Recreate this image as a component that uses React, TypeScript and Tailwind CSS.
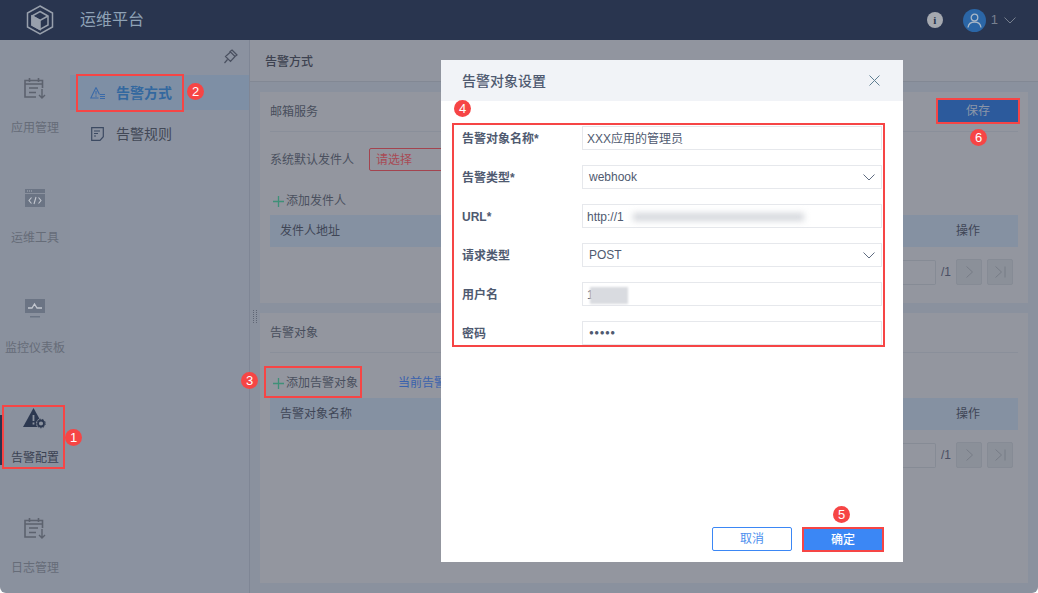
import type { ReactNode } from 'react';

const ink = '#5c626e';

function CalendarIcon() {
  return (
    <svg width="24" height="24" viewBox="0 0 24 24" fill="none" stroke={ink} strokeWidth="1.6">
      <path d="M19.5 12V4.5H2V21h11" />
      <path d="M6.5 2v4M15.5 2v4M2 8h17.5M6 12h9M6 16.5h7" />
      <path d="M19 13v9M16 19l3 3 3-3" strokeWidth="1.4" />
    </svg>
  );
}

function CodeIcon() {
  return (
    <svg width="20" height="18" viewBox="0 0 20 18">
      <path d="M0 0h20v4H0z" fill="#6b7484" />
      <path d="M0 5h20v13H0z" fill="#6b7484" />
      <path d="M2 2h1M4 2h1M6 2h1" stroke="#a9aeb8" strokeWidth="1" />
      <path d="M6.5 8.5L4 11.5l2.500 3M13.500 8.500l2.500 3-2.500 3M11 8l-2 7" stroke="#c3c7cf" strokeWidth="1.100" fill="none" />
    </svg>
  );
}

function MonitorIcon() {
  return (
    <svg width="20" height="19" viewBox="0 0 20 19">
      <path d="M0 0h20v14H0z" fill="#6b7484" />
      <path d="M5 17h10v1.500H5z" fill="#6b7484" />
      <path d="M3 9h4l2.500-4 2.500 4h5" stroke="#c3c7cf" strokeWidth="1.300" fill="none" />
    </svg>
  );
}

function AlertGearIcon() {
  return (
    <svg width="24" height="21" viewBox="0 0 24 21">
      <path d="M10.500 0L21 19H0z" fill="#2c3850" />
      <path d="M10.500 7v6M10.500 14.500v2" stroke="#8b929e" strokeWidth="1.800" />
      <circle cx="18" cy="15.500" r="5" fill="#8b929e" />
      <circle cx="18" cy="15.500" r="3" fill="none" stroke="#2c3850" strokeWidth="1.800" />
      <circle cx="18" cy="15.500" r="4.300" fill="none" stroke="#2c3850" strokeWidth="1" strokeDasharray="1.500 1.500" />
    </svg>
  );
}

function Logo() {
  return (
    <svg width="28" height="30" viewBox="0 0 28 30" fill="none" stroke="#98a0ac" strokeWidth="1.500">
      <path d="M14 1l12.500 7v14L14 29 1.500 22V8z" />
      <path d="M14 6.500l8 4.500v9l-8 4.500-8-4.500v-9z" />
      <path d="M6 11l8 4.500 8-4.500" />
      <path d="M14 15.500v9l-8-4.500v-9z" fill="#98a0ac" />
    </svg>
  );
}

function PinIcon() {
  return (
    <svg width="16" height="16" viewBox="0 0 16 16" fill="none" stroke="#4a5060" strokeWidth="1.200">
      <path d="M10 1l5 5-2 1.500-5-5zM8.500 3L3.500 7.500l5 5L13 7.500M5.500 10.500L2.500 14" />
    </svg>
  );
}

function WarnListIcon() {
  return (
    <svg width="15" height="14" viewBox="0 0 15 14" fill="none" stroke="#3a6aa8" strokeWidth="1.100">
      <path d="M6 1.500L.8 12h7.700M6 1.500l3.500 7" />
      <path d="M6 5v3.500M6 9.500v1.300M10 8.500h5M10 10.500h5M10 12.500h5" />
    </svg>
  );
}

function RuleIcon() {
  return (
    <svg width="13" height="14" viewBox="0 0 13 14" fill="none" stroke="#3c4a62" strokeWidth="1.200">
      <path d="M.7.700h11.600v9L9 13.300H.7z" />
      <path d="M3 4h6M3 6.500h4M3 9h2" />
    </svg>
  );
}

function Chevron({ stroke }: { stroke: string }) {
  return (
    <svg width="12" height="7" viewBox="0 0 12 7" fill="none" stroke={stroke} strokeWidth="1">
      <path d="M.5.500L6 6l5.500-5.500" />
    </svg>
  );
}

function PlusLabel({ children }: { children: ReactNode }) {
  return (
    <div className="flex items-center gap-[2px] pl-[3px] text-[#4a505e]">
      <svg width="11" height="11" viewBox="0 0 11 11" stroke="#3f9078" strokeWidth="1.300">
        <path d="M5.500 0v11M0 5.500h11" />
      </svg>
      <span>{children}</span>
    </div>
  );
}

function Badge({ n, className }: { n: number; className: string }) {
  return (
    <div className={`absolute z-30 flex h-[17px] w-[17px] items-center justify-center rounded-full bg-[#f64545] text-[13px] font-medium leading-none text-white ${className}`}>
      {n}
    </div>
  );
}

function Mark({ className }: { className: string }) {
  return <div className={`absolute z-30 border-2 border-[#f64545] ${className}`} />;
}

function RailItem({ icon, label, active }: { icon: ReactNode; label: string; active?: boolean }) {
  return (
    <div className="flex h-[110px] flex-col items-center">
      <div className="flex h-6 items-center justify-center">{icon}</div>
      <div className={`mt-[20px] text-xs ${active ? 'text-[#3a4252]' : 'text-[#666c78]'}`}>{label}</div>
    </div>
  );
}

function Pager() {
  return (
    <div className="flex items-center justify-end pr-[5px] text-xs text-[#4a4f64]">
      <div className="h-[25px] w-[60px] rounded-l-none rounded-r-[2px] border border-l-0 border-[#868b95]" />
      <span className="ml-[5px] mr-[5px] w-[10px]">/1</span>
      <div className="flex h-[26px] w-[26px] items-center justify-center rounded-[2px] border border-[#868b95] bg-[#8b9099]">
        <svg width="7" height="12" viewBox="0 0 7 12" fill="none" stroke="#777c86"><path d="M.5.500L6.500 6l-6 5.500" /></svg>
      </div>
      <div className="ml-[5px] flex h-[26px] w-[26px] items-center justify-center rounded-[2px] border border-[#868b95] bg-[#8b9099]">
        <svg width="11" height="12" viewBox="0 0 11 12" fill="none" stroke="#777c86"><path d="M.5.500L6.500 6l-6 5.500M10 .5v11" /></svg>
      </div>
    </div>
  );
}

function TableHead({ label }: { label: string }) {
  return (
    <div className="flex h-8 items-center justify-between bg-[#8591a2] pl-[10px] pr-[38px] text-xs text-[#3f4656]">
      <span>{label}</span>
      <span>操作</span>
    </div>
  );
}

function FormRow({ label, children }: { label: string; children: ReactNode }) {
  return (
    <div className="flex h-6 items-center">
      <div className="w-[128px] pl-2 pt-[1px] text-xs font-bold text-[#4f5a70]">{label}</div>
      <div className="relative flex h-6 w-[300px] items-center justify-between border border-[#e6e8ec] pl-[4px] pr-[6px] pt-[1px] text-xs text-[#4f5a70]">
        {children}
      </div>
    </div>
  );
}

export default function App() {
  return (
    <div className="relative h-[593px] w-[1038px] overflow-hidden bg-white text-xs [font-family:'Liberation_Sans','Noto_Sans_CJK_SC',sans-serif]">
      <div className="flex h-full flex-col overflow-hidden rounded-b-[6px]">
        {/* top bar */}
        <header className="flex h-10 shrink-0 items-center bg-[#29354f]">
          <div className="ml-[26px]"><Logo /></div>
          <div className="ml-[26px] text-base text-[#8fa2b6]">运维平台</div>
          <div className="ml-auto flex items-center">
            <div className="flex h-4 w-4 items-center justify-center rounded-full bg-[#a5a9b0] font-bold text-[11px] text-[#29354f] [font-family:'Liberation_Serif',serif]">i</div>
            <div className="ml-[20px] flex h-[23px] w-[23px] items-center justify-center rounded-full bg-[#2b66a6]">
              <svg width="15" height="15" viewBox="0 0 15 15" fill="none" stroke="#a9b8c8" strokeWidth="1.300">
                <circle cx="7.500" cy="4.500" r="3.300" />
                <path d="M1 14.500c.5-4 3-5.500 6.500-5.500s6 1.500 6.500 5.500" />
              </svg>
            </div>
            <span className="ml-[5px] text-[13px] text-[#77808f]">1</span>
            <div className="ml-[6px] mr-[22px]"><Chevron stroke="#77808f" /></div>
          </div>
        </header>

        <div className="flex min-h-0 flex-1">
          {/* icon rail */}
          <nav className="w-[70px] shrink-0 bg-[#8a919e] pt-[36px]">
            <RailItem icon={<CalendarIcon />} label="应用管理" />
            <RailItem icon={<CodeIcon />} label="运维工具" />
            <RailItem icon={<MonitorIcon />} label="监控仪表板" />
            <RailItem icon={<AlertGearIcon />} label="告警配置" active />
            <RailItem icon={<CalendarIcon />} label="日志管理" />
          </nav>

          {/* sub menu */}
          <aside className="w-[180px] shrink-0 border-r border-[#7f8695] bg-[#8b92a0]">
            <div className="flex h-[35px] justify-end pr-[11px] pt-[9px]"><PinIcon /></div>
            <div className="flex h-[35px] items-center bg-[#7e8fa5] pl-[20px] text-sm font-bold text-[#33689f]">
              <WarnListIcon />
              <span className="ml-[11px]">告警方式</span>
            </div>
            <div className="mt-[6px] flex h-[35px] items-center pl-[21px] text-sm text-[#424856]">
              <RuleIcon />
              <span className="ml-[12px]">告警规则</span>
            </div>
          </aside>

          {/* main */}
          <main className="flex min-w-0 flex-1 flex-col bg-[#8a919e]">
            <div className="flex h-[42px] shrink-0 items-center border-b border-[#828894] bg-[#91959f] pl-[15px] pt-[3px] font-medium text-[#3d4250]">告警方式</div>
            <div className="flex flex-1 flex-col gap-[10px] px-[10px] pb-[10px] pt-[10px]">
              <section className="flex h-[211px] flex-col bg-[#93969f] px-[10px]">
                <div className="flex h-10 shrink-0 items-center justify-between border-b border-[#8a8f9a] pt-[1px] text-[#484e5c]">
                  <span>邮箱服务</span>
                </div>
                <div className="mt-[16px] flex items-center text-[#4a505e]">
                  <span className="w-[99px] pt-[1px]">系统默认发件人</span>
                  <div className="flex h-[23px] w-[100px] items-center rounded-[2px] border border-[#a3444f] pl-[6px] text-[#a84a55]">请选择</div>
                </div>
                <div className="mt-[22px] h-[16px]"><PlusLabel>添加发件人</PlusLabel></div>
                <div className="mt-[6px]"><TableHead label="发件人地址" /></div>
                <div className="mt-[12px]"><Pager /></div>
              </section>
              <section className="flex flex-1 flex-col bg-[#93969f] px-[10px]">
                <div className="flex h-10 shrink-0 items-center border-b border-[#8a8f9a] text-[#484e5c]">告警对象</div>
                <div className="mt-[22px] flex h-[16px] items-center">
                  <PlusLabel>添加告警对象</PlusLabel>
                  <span className="ml-[40px] text-[#3a62ad]">当前告警对象</span>
                </div>
                <div className="mt-[7px]"><TableHead label="告警对象名称" /></div>
                <div className="mt-[12px]"><Pager /></div>
              </section>
            </div>
          </main>
        </div>
      </div>

      {/* splitter grip */}
      <div className="absolute left-[253px] top-[310px] h-[13px] w-1 border-x border-dotted border-[#5f6675]" />

      {/* active rail marker */}
      <div className="absolute left-0 top-[415px] h-[50px] w-[2px] bg-[#29354f]" />

      {/* save button */}
      <div className="absolute left-[938px] top-[100px] flex h-[22px] w-[80px] items-center justify-center bg-[#2c5a9c] text-[#8b96a8]">保存</div>

      {/* dialog */}
      <div className="absolute left-[441px] top-[60px] z-20 flex h-[502px] w-[462px] flex-col bg-white">
        <div className="flex h-[41px] shrink-0 items-center justify-between bg-[#f1f3f7] pl-[21px] pr-[23px]">
          <span className="text-sm font-medium text-[#4f5a70]">告警对象设置</span>
          <svg width="11" height="11" viewBox="0 0 11 11" stroke="#5f7f92" strokeWidth="1"><path d="M.5.500l10 10M10.500.500l-10 10" /></svg>
        </div>
        <div className="ml-[11px] mt-[22px] flex h-[224px] w-[433px] flex-col gap-[15px] border-2 border-[#f64545] pt-[1px]">
          <FormRow label="告警对象名称*">
            <span>XXX应用的管理员</span>
          </FormRow>
          <FormRow label="告警类型*">
            <span className="mb-[2px] pl-[2px]">webhook</span>
            <Chevron stroke="#5f6b80" />
          </FormRow>
          <FormRow label="URL*">
            <span>http://1</span>
            <div className="absolute left-[44px] top-[3px] h-[19px] w-[183px] bg-white">
              <div className="mx-[6px] mt-[5px] h-[8px] bg-[#d4d7dc] blur-[3px]" />
            </div>
          </FormRow>
          <FormRow label="请求类型">
            <span className="mb-[2px] pl-[2px]">POST</span>
            <Chevron stroke="#5f6b80" />
          </FormRow>
          <FormRow label="用户名">
            <span>1</span>
            <div className="absolute left-[7px] top-[4px] h-[17px] w-[38px] bg-[#d9dbe0] blur-[1px]" />
          </FormRow>
          <FormRow label="密码">
            <span className="pl-[2px] text-[8px] tracking-[0.5px]">●●●●●</span>
          </FormRow>
        </div>
        <div className="mt-auto flex justify-end gap-[10px] pb-[10px] pr-[19px]">
          <div className="flex h-6 w-20 items-center justify-center rounded-[2px] border border-[#3b87f5] text-[#4d8fee]">取消</div>
          <div className="flex h-[25px] w-[82px] items-center justify-center border-2 border-[#f64545] bg-[#3b87f5] font-medium text-white">确定</div>
        </div>
      </div>

      {/* numbered callouts */}
      <Mark className="left-[2px] top-[405px] h-[64px] w-[63px]" />
      <Mark className="left-[76px] top-[74px] h-[38px] w-[108px]" />
      <Mark className="left-[264px] top-[366px] h-[32px] w-[98px]" />
      <Mark className="left-[936px] top-[98px] h-[26px] w-[84px]" />
      <Badge n={1} className="left-[65px] top-[429px]" />
      <Badge n={2} className="left-[187px] top-[83px]" />
      <Badge n={3} className="left-[241px] top-[372px]" />
      <Badge n={4} className="left-[454px] top-[100px]" />
      <Badge n={5} className="left-[833px] top-[506px]" />
      <Badge n={6} className="left-[970px] top-[129px]" />
    </div>
  );
}
